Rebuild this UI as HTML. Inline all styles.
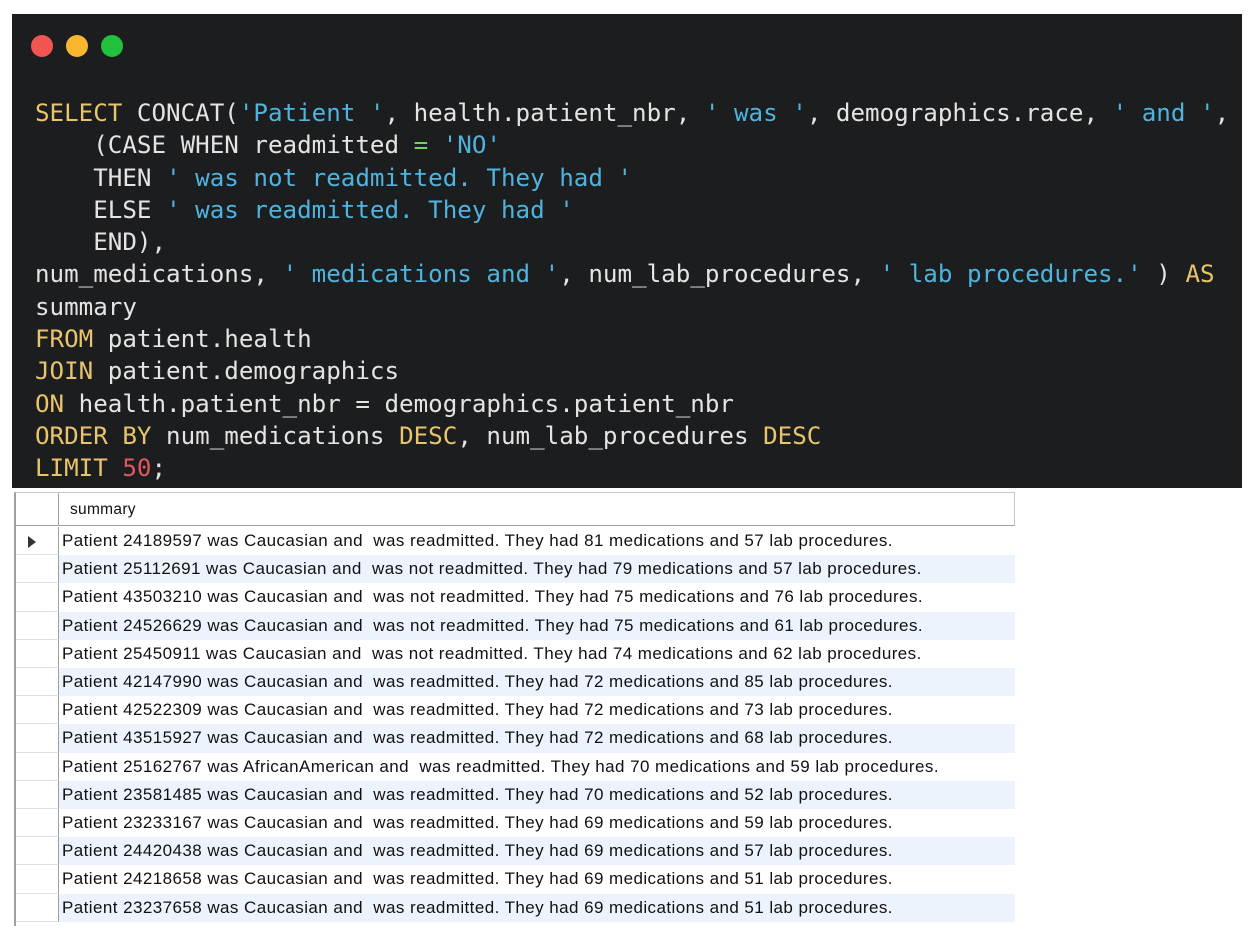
<!DOCTYPE html>
<html><head><meta charset="utf-8"><style>
body{margin:0;width:1250px;height:925px;background:#fff;position:relative;overflow:hidden}
#code{position:absolute;left:12px;top:14px;width:1230px;height:474px;background:#1c1d1f}
.dot{position:absolute;top:21px;width:22px;height:22px;border-radius:50%}
pre{position:absolute;left:23px;top:83px;margin:0;font-family:"DejaVu Sans Mono","Liberation Mono",monospace;font-size:24.2px;line-height:32.3px;color:#e4e4e4;white-space:pre}
.k{color:#e9c46a}.s{color:#4fb3de}.n{color:#e0575f}.g{color:#7ccf5b}
#tbl{position:absolute;left:14px;top:492px;width:999px;height:433px;border-left:2px solid #a0a0a0;border-top:1px solid #c8c8c8;font-family:"Liberation Sans",Tahoma,sans-serif;font-size:17px;letter-spacing:0.43px;color:#111}
.r{position:absolute;left:0;width:999px;height:28.2px;line-height:28.2px}
.rh{position:absolute;left:0;width:43px;height:100%;border-right:1px solid #a0a0a0;border-bottom:1px solid #e0e0e0;box-sizing:border-box;background:#fff}
.t{position:absolute;left:46px;top:0;white-space:nowrap}
.b{background:#edf3fd}
</style></head><body>
<div id="code">
<div class="dot" style="left:19px;background:#f25550"></div>
<div class="dot" style="left:54px;background:#fbb52e"></div>
<div class="dot" style="left:89px;background:#22c13c"></div>
<pre><span class="k">SELECT</span> CONCAT(<span class="s">'Patient '</span>, health.patient_nbr, <span class="s">' was '</span>, demographics.race, <span class="s">' and '</span>,
    (CASE WHEN readmitted <span class="g">=</span> <span class="s">'NO'</span>
    THEN <span class="s">' was not readmitted. They had '</span>
    ELSE <span class="s">' was readmitted. They had '</span>
    END),
num_medications, <span class="s">' medications and '</span>, num_lab_procedures, <span class="s">' lab procedures.'</span> ) <span class="k">AS</span>
summary
<span class="k">FROM</span> patient.health
<span class="k">JOIN</span> patient.demographics
<span class="k">ON</span> health.patient_nbr = demographics.patient_nbr
<span class="k">ORDER BY</span> num_medications <span class="k">DESC</span>, num_lab_procedures <span class="k">DESC</span>
<span class="k">LIMIT</span> <span class="n">50</span>;</pre>
</div>
<div id="tbl">
<div class="r" style="top:0;height:33px;line-height:33px;border-bottom:1px solid #a0a0a0;border-right:1px solid #c8c8c8;box-sizing:border-box;font-size:15.5px;letter-spacing:0.3px"><div class="rh" style="border-bottom:none"></div><div class="t" style="left:54px">summary</div></div>
<div class="r" style="top:34px"><div class="rh"><span style="position:absolute;left:12px;top:9px;width:0;height:0;border-left:8px solid #333;border-top:6px solid transparent;border-bottom:6px solid transparent"></span></div><div class="t">Patient 24189597 was Caucasian and &nbsp;was readmitted. They had 81 medications and 57 lab procedures.</div></div>
<div class="r b" style="top:62.2px"><div class="rh"></div><div class="t">Patient 25112691 was Caucasian and &nbsp;was not readmitted. They had 79 medications and 57 lab procedures.</div></div>
<div class="r" style="top:90.4px"><div class="rh"></div><div class="t">Patient 43503210 was Caucasian and &nbsp;was not readmitted. They had 75 medications and 76 lab procedures.</div></div>
<div class="r b" style="top:118.6px"><div class="rh"></div><div class="t">Patient 24526629 was Caucasian and &nbsp;was not readmitted. They had 75 medications and 61 lab procedures.</div></div>
<div class="r" style="top:146.8px"><div class="rh"></div><div class="t">Patient 25450911 was Caucasian and &nbsp;was not readmitted. They had 74 medications and 62 lab procedures.</div></div>
<div class="r b" style="top:175px"><div class="rh"></div><div class="t">Patient 42147990 was Caucasian and &nbsp;was readmitted. They had 72 medications and 85 lab procedures.</div></div>
<div class="r" style="top:203.2px"><div class="rh"></div><div class="t">Patient 42522309 was Caucasian and &nbsp;was readmitted. They had 72 medications and 73 lab procedures.</div></div>
<div class="r b" style="top:231.4px"><div class="rh"></div><div class="t">Patient 43515927 was Caucasian and &nbsp;was readmitted. They had 72 medications and 68 lab procedures.</div></div>
<div class="r" style="top:259.6px"><div class="rh"></div><div class="t">Patient 25162767 was AfricanAmerican and &nbsp;was readmitted. They had 70 medications and 59 lab procedures.</div></div>
<div class="r b" style="top:287.8px"><div class="rh"></div><div class="t">Patient 23581485 was Caucasian and &nbsp;was readmitted. They had 70 medications and 52 lab procedures.</div></div>
<div class="r" style="top:316px"><div class="rh"></div><div class="t">Patient 23233167 was Caucasian and &nbsp;was readmitted. They had 69 medications and 59 lab procedures.</div></div>
<div class="r b" style="top:344.2px"><div class="rh"></div><div class="t">Patient 24420438 was Caucasian and &nbsp;was readmitted. They had 69 medications and 57 lab procedures.</div></div>
<div class="r" style="top:372.4px"><div class="rh"></div><div class="t">Patient 24218658 was Caucasian and &nbsp;was readmitted. They had 69 medications and 51 lab procedures.</div></div>
<div class="r b" style="top:400.6px"><div class="rh"></div><div class="t">Patient 23237658 was Caucasian and &nbsp;was readmitted. They had 69 medications and 51 lab procedures.</div></div>
</div>
</body></html>
